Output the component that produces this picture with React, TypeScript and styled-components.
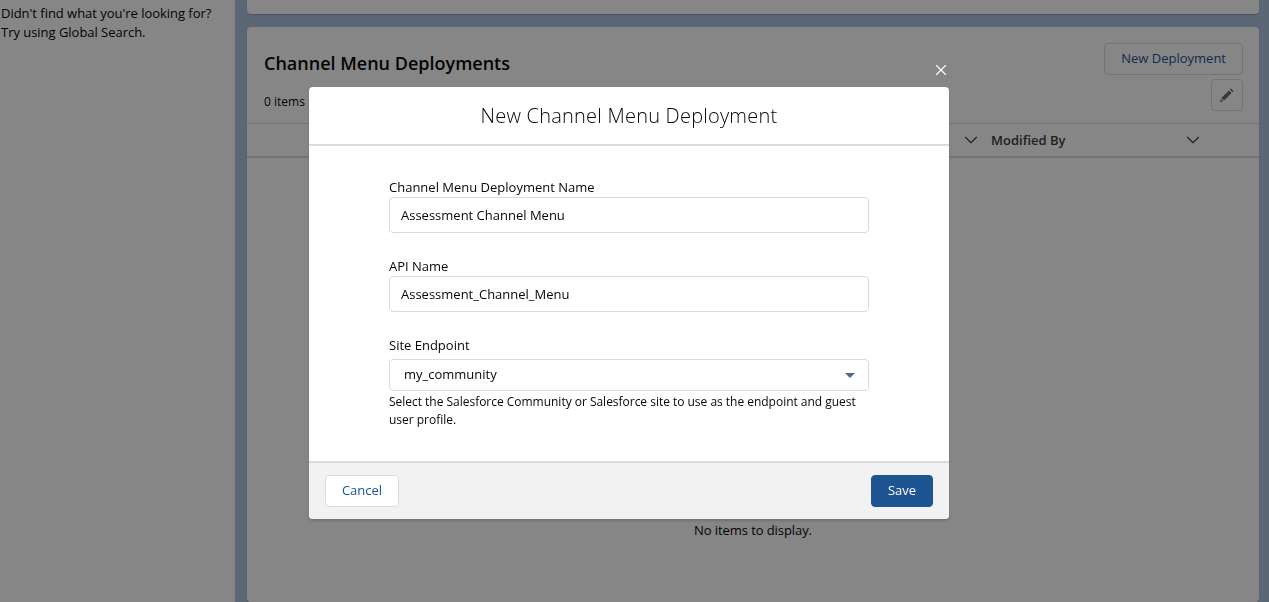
import React from 'react';
import styled, {createGlobalStyle} from 'styled-components';
import {ChevronDown, X} from 'lucide-react';

const GlobalStyle = createGlobalStyle`
  html, body {
    margin: 0;
    height: 602px;
    overflow: hidden;
    font-family: "Open Sans", "Noto Sans", sans-serif;
    font-size: 13px;
    color: #080707;
  }
  * { box-sizing: border-box; }
`
const Page = styled.div`
  display: flex;
  height: 602px;
  background: #b0c4df;
`
const Sidebar = styled.aside`
  width: 235px;
  flex-shrink: 0;
  padding: 4px 0 0 1px;
  background: #fff;
  line-height: 19px;
  letter-spacing: -0.03px;
`
const Main = styled.main`
  flex: 1;
  display: flex;
  flex-direction: column;
  gap: 13px;
  padding-left: 12px;
  padding-right: 10px;
  margin-top: -10px;
`
const Card = styled.section`
  background: #fff;
  border-radius: 4px;
  box-shadow: 0 1px 1px rgba(0, 0, 0, 0.2);
`
const TopCard = styled(Card)`
  height: 24px;
  flex-shrink: 0;
`
const DeployCard = styled(Card)`
  flex: 1;
  display: flex;
  flex-direction: column;
`
const CardHead = styled.div`
  display: flex;
  justify-content: space-between;
  height: 96px;
  padding: 16px 16px 0 17px;
`
const CardTitle = styled.h2`
  margin: 10px 0 0;
  font-size: 18px;
  line-height: 20px;
  font-weight: 600;
`
const Count = styled.p`
  margin: 20px 0 0;
  font-size: 12px;
  line-height: 18px;
`
const Actions = styled.div`
  display: flex;
  flex-direction: column;
  align-items: flex-end;
  gap: 4px;
`
const OutlineButton = styled.button`
  display: flex;
  align-items: center;
  justify-content: center;
  height: 32px;
  padding: 0 16px 3px;
  background: #fff;
  border: 1px solid #dddbda;
  border-radius: 4px;
  color: #1b5297;
  font: inherit;
`
const IconButton = styled(OutlineButton)`
  width: 32px;
  padding: 0;
  color: #706e6b;
`
const TableHead = styled.div`
  display: flex;
  justify-content: flex-end;
  align-items: center;
  height: 35px;
  border-top: 1px solid #dddbda;
  border-bottom: 2px solid #dddbda;
  font-weight: 600;
  color: #3e3e3c;
`
const HeadCell = styled.div<{$width: number; $left?: number; $right?: number}>`
  display: flex;
  align-items: center;
  justify-content: space-between;
  width: ${p => p.$width}px;
  padding-left: ${p => p.$left ?? 0}px;
  padding-right: ${p => p.$right ?? 0}px;
`
const Empty = styled.div`
  flex: 1;
  display: flex;
  justify-content: center;
  padding-top: 363px;
  line-height: 18px;
  letter-spacing: -0.08px;
`
const Backdrop = styled.div`
  position: fixed;
  inset: 0;
  background: rgba(0, 0, 0, 0.475);
`
const ModalWrap = styled.div`
  position: fixed;
  top: 87px;
  left: 309px;
  width: 640px;
`
const Close = styled.button`
  position: absolute;
  top: -27px;
  right: -2px;
  width: 20px;
  height: 20px;
  padding: 0;
  display: flex;
  align-items: center;
  justify-content: center;
  background: none;
  border: 0;
  color: #fff;
`
const Modal = styled.div`
  background: #fff;
  border-radius: 4px;
  overflow: hidden;
  box-shadow: 0 2px 3px rgba(0, 0, 0, 0.16);
`
const ModalHeader = styled.header`
  height: 59px;
  border-bottom: 2px solid #dddbda;
  display: flex;
  align-items: center;
  justify-content: center;
`
const ModalTitle = styled.h1`
  margin: 0;
  font-size: 20px;
  line-height: 25px;
  font-weight: 300;
  letter-spacing: 0.22px;
`
const ModalBody = styled.div`
  height: 315px;
  padding: 32px 80px 0;
  display: flex;
  flex-direction: column;
  gap: 24px;
`
const Field = styled.div`
  display: flex;
  flex-direction: column;
`
const Label = styled.label<{$gap?: number}>`
  line-height: 18px;
  margin-bottom: ${p => p.$gap ?? 1}px;
`
const Input = styled.input`
  height: 36px;
  width: 100%;
  padding: 0 11px;
  border: 1px solid #dddbda;
  border-radius: 4px;
  font: inherit;
  color: #080707;
  background: #fff;
`
const SelectBox = styled.div`
  position: relative;
  display: flex;
  align-items: center;
  height: 32px;
  padding: 0 14px 2px;
  border: 1px solid #dddbda;
  border-radius: 4px;
`
const Caret = styled.span`
  position: absolute;
  right: 13px;
  top: 13px;
  border-left: 5px solid transparent;
  border-right: 5px solid transparent;
  border-top: 5px solid #54698d;
`
const Help = styled.p`
  margin: 2px 0 0;
  font-size: 12px;
  line-height: 18px;
  letter-spacing: -0.02px;
`
const ModalFooter = styled.footer`
  height: 58px;
  display: flex;
  align-items: center;
  justify-content: space-between;
  padding: 0 16px;
  background: #f3f2f2;
  border-top: 2px solid #dddbda;
`
const Cancel = styled(OutlineButton)`
  width: 74px;
  padding: 0 0 3px;
`
const Save = styled(OutlineButton)`
  width: 62px;
  padding: 0 0 3px;
  background: #1f5493;
  border-color: #1f5493;
  color: #fff;
`

const PencilIcon = () => (
    <svg width={14} height={14} viewBox="0 0 14 14" fill="currentColor" aria-hidden="true">
        <path d="M10.9 0.4 13.6 3.1 12.4 4.3 9.7 1.6Z"/>
        <path d="M8.9 2.4 11.6 5.1 4.1 12.6 1.4 9.9Z"/>
        <path d="M0.8 10.7 3.3 13.2 0 14Z"/>
    </svg>
);

const App = () => (
    <>
        <GlobalStyle/>
        <Page>
            <Sidebar>Didn't find what you're looking for?<br/>Try using Global Search.</Sidebar>
            <Main>
                <TopCard/>
                <DeployCard>
                    <CardHead>
                        <div>
                            <CardTitle>Channel Menu Deployments</CardTitle>
                            <Count>0 items</Count>
                        </div>
                        <Actions>
                            <OutlineButton type={'button'}>New Deployment</OutlineButton>
                            <IconButton type={'button'} aria-label={'Edit'}>
                                <PencilIcon/>
                            </IconButton>
                        </Actions>
                    </CardHead>
                    <TableHead>
                        <HeadCell $width={32}>
                            <span/>
                            <ChevronDown size={22} strokeWidth={1.2}/>
                        </HeadCell>
                        <HeadCell $width={277} $left={9} $right={55}>
                            Modified By
                            <ChevronDown size={22} strokeWidth={1.2}/>
                        </HeadCell>
                    </TableHead>
                    <Empty>No items to display.</Empty>
                </DeployCard>
            </Main>
        </Page>
        <Backdrop/>
        <ModalWrap>
            <Close type={'button'} aria-label={'Close'}><X size={18} strokeWidth={1.5}/></Close>
            <Modal>
                <ModalHeader>
                    <ModalTitle>New Channel Menu Deployment</ModalTitle>
                </ModalHeader>
                <ModalBody>
                    <Field>
                        <Label>Channel Menu Deployment Name</Label>
                        <Input readOnly value={'Assessment Channel Menu'}/>
                    </Field>
                    <Field>
                        <Label>API Name</Label>
                        <Input readOnly value={'Assessment_Channel_Menu'}/>
                    </Field>
                    <Field>
                        <Label $gap={5}>Site Endpoint</Label>
                        <SelectBox>my_community<Caret/></SelectBox>
                        <Help>Select the Salesforce Community or Salesforce site to use as the endpoint and guest user profile.</Help>
                    </Field>
                </ModalBody>
                <ModalFooter>
                    <Cancel type={'button'}>Cancel</Cancel>
                    <Save type={'button'}>Save</Save>
                </ModalFooter>
            </Modal>
        </ModalWrap>
    </>
);

export default App;
